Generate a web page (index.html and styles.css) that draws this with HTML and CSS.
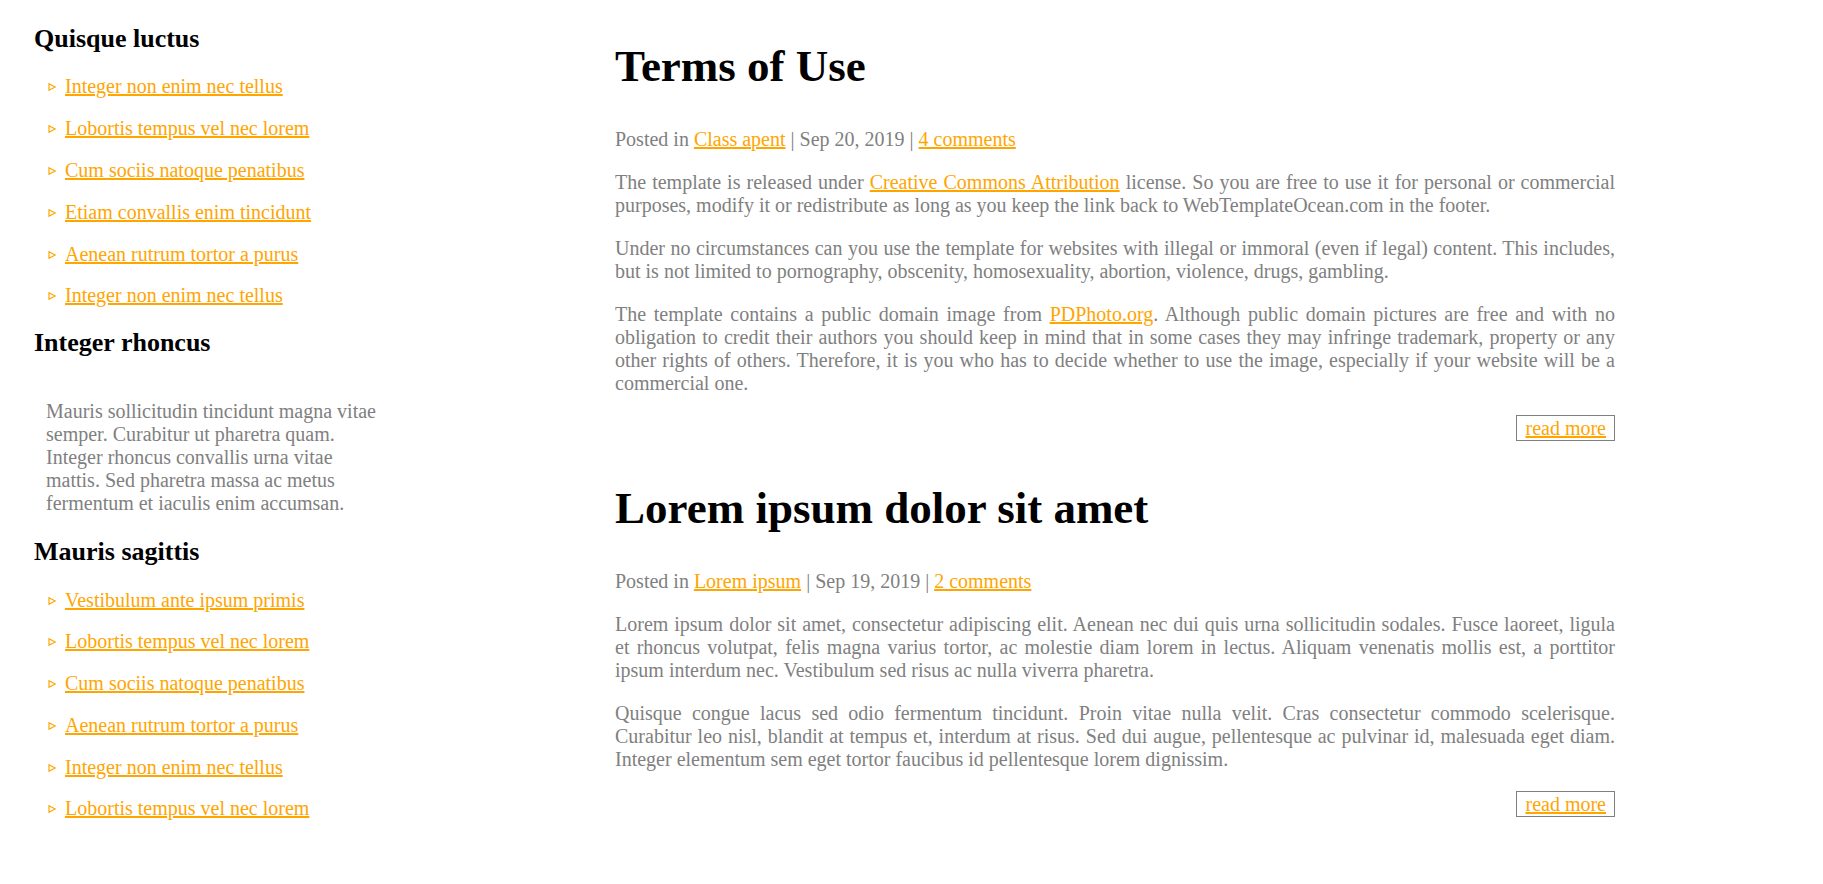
FILE: index.html
```html
<!DOCTYPE html>
<html lang="en">
<head>
<meta charset="utf-8">
<title>Terms of Use</title>
<link rel="stylesheet" href="styles.css">
</head>
<body>
<div class="page">
  <aside class="sidebar">
    <h3 class="side-title">Quisque luctus</h3>
    <ul class="side-list">
      <li><svg class="tri" viewBox="0 0 8 8" width="8" height="8"><polygon points="1,0.8 7.2,4 1,7.2"/></svg><a href="#">Integer non enim nec tellus</a></li>
      <li><svg class="tri" viewBox="0 0 8 8" width="8" height="8"><polygon points="1,0.8 7.2,4 1,7.2"/></svg><a href="#">Lobortis tempus vel nec lorem</a></li>
      <li><svg class="tri" viewBox="0 0 8 8" width="8" height="8"><polygon points="1,0.8 7.2,4 1,7.2"/></svg><a href="#">Cum sociis natoque penatibus</a></li>
      <li><svg class="tri" viewBox="0 0 8 8" width="8" height="8"><polygon points="1,0.8 7.2,4 1,7.2"/></svg><a href="#">Etiam convallis enim tincidunt</a></li>
      <li><svg class="tri" viewBox="0 0 8 8" width="8" height="8"><polygon points="1,0.8 7.2,4 1,7.2"/></svg><a href="#">Aenean rutrum tortor a purus</a></li>
      <li><svg class="tri" viewBox="0 0 8 8" width="8" height="8"><polygon points="1,0.8 7.2,4 1,7.2"/></svg><a href="#">Integer non enim nec tellus</a></li>
    </ul>
    <h3 class="side-title">Integer rhoncus</h3>
    <p class="side-text">Mauris sollicitudin tincidunt magna vitae semper. Curabitur ut pharetra quam. Integer rhoncus convallis urna vitae mattis. Sed pharetra massa ac metus fermentum et iaculis enim accumsan.</p>
    <h3 class="side-title">Mauris sagittis</h3>
    <ul class="side-list">
      <li><svg class="tri" viewBox="0 0 8 8" width="8" height="8"><polygon points="1,0.8 7.2,4 1,7.2"/></svg><a href="#">Vestibulum ante ipsum primis</a></li>
      <li><svg class="tri" viewBox="0 0 8 8" width="8" height="8"><polygon points="1,0.8 7.2,4 1,7.2"/></svg><a href="#">Lobortis tempus vel nec lorem</a></li>
      <li><svg class="tri" viewBox="0 0 8 8" width="8" height="8"><polygon points="1,0.8 7.2,4 1,7.2"/></svg><a href="#">Cum sociis natoque penatibus</a></li>
      <li><svg class="tri" viewBox="0 0 8 8" width="8" height="8"><polygon points="1,0.8 7.2,4 1,7.2"/></svg><a href="#">Aenean rutrum tortor a purus</a></li>
      <li><svg class="tri" viewBox="0 0 8 8" width="8" height="8"><polygon points="1,0.8 7.2,4 1,7.2"/></svg><a href="#">Integer non enim nec tellus</a></li>
      <li><svg class="tri" viewBox="0 0 8 8" width="8" height="8"><polygon points="1,0.8 7.2,4 1,7.2"/></svg><a href="#">Lobortis tempus vel nec lorem</a></li>
    </ul>
  </aside>
  <main class="content">
    <article class="post">
      <h1 class="post-title">Terms of Use</h1>
      <p class="meta">Posted in <a href="#">Class apent</a> | Sep 20, 2019 | <a href="#">4 comments</a></p>
      <p>The template is released under <a href="#">Creative Commons Attribution</a> license. So you are free to use it for personal or commercial purposes, modify it or redistribute as long as you keep the link back to WebTemplateOcean.com in the footer.</p>
      <p>Under no circumstances can you use the template for websites with illegal or immoral (even if legal) content. This includes, but is not limited to pornography, obscenity, homosexuality, abortion, violence, drugs, gambling.</p>
      <p>The template contains a public domain image from <a href="#">PDPhoto.org</a>. Although public domain pictures are free and with no obligation to credit their authors you should keep in mind that in some cases they may infringe trademark, property or any other rights of others. Therefore, it is you who has to decide whether to use the image, especially if your website will be a commercial one.</p>
      <div class="more-row"><a class="more" href="#">read more</a></div>
    </article>
    <article class="post">
      <h1 class="post-title">Lorem ipsum dolor sit amet</h1>
      <p class="meta">Posted in <a href="#">Lorem ipsum</a> | Sep 19, 2019 | <a href="#">2 comments</a></p>
      <p>Lorem ipsum dolor sit amet, consectetur adipiscing elit. Aenean nec dui quis urna sollicitudin sodales. Fusce laoreet, ligula et rhoncus volutpat, felis magna varius tortor, ac molestie diam lorem in lectus. Aliquam venenatis mollis est, a porttitor ipsum interdum nec. Vestibulum sed risus ac nulla viverra pharetra.</p>
      <p>Quisque congue lacus sed odio fermentum tincidunt. Proin vitae nulla velit. Cras consectetur commodo scelerisque. Curabitur leo nisl, blandit at tempus et, interdum at risus. Sed dui augue, pellentesque ac pulvinar id, malesuada eget diam. Integer elementum sem eget tortor faucibus id pellentesque lorem dignissim.</p>
      <div class="more-row"><a class="more" href="#">read more</a></div>
    </article>
  </main>
</div>
</body>
</html>
```
FILE: styles.css
```css
html, body {
  margin: 0;
  padding: 0;
  background: #ffffff;
}

body {
  font-family: "Liberation Serif", "Times New Roman", serif;
  font-size: 20px;
  color: #808080;
}

a {
  color: #ffa500;
  text-decoration: underline;
}

.page {
  display: flex;
  align-items: flex-start;
  padding-left: 34px;
}

/* Sidebar */
.sidebar {
  width: 352px;
  flex: none;
  padding-top: 23.5px;
}

.side-title {
  margin: 0;
  font-size: 26px;
  font-weight: bold;
  color: #000000;
}

.side-list {
  list-style: none;
  margin: 12.5px 0 11px;
  padding: 0;
}

.side-list li {
  display: flex;
  align-items: center;
  padding: 9.4px 0 9.4px 14px;
  line-height: 23px;
}

.tri {
  flex: none;
  margin-right: 9px;
  margin-top: 1px;
}

.tri polygon {
  fill: #ffffff;
  stroke: #ffa500;
  stroke-width: 1.2;
}

.side-text {
  margin: 42px 0 22px 12px;
  line-height: 23px;
}

/* Main content */
.content {
  width: 1000px;
  flex: none;
  margin-left: 229px;
}

.post {
  padding-top: 40px;
}

.post + .post {
  padding-top: 41px;
}

.post-title {
  margin: 0 0 36px;
  font-size: 45px;
  font-weight: bold;
  color: #000000;
}

.post p {
  margin: 0 0 20px;
  line-height: 23px;
  text-align: justify;
}

.post p.meta {
  text-align: left;
}

.more-row {
  display: flex;
  justify-content: flex-end;
  margin-top: 20px;
}

.more {
  display: inline-block;
  border: 1px solid #808080;
  padding: 0 8px;
  line-height: 24px;
}
```
